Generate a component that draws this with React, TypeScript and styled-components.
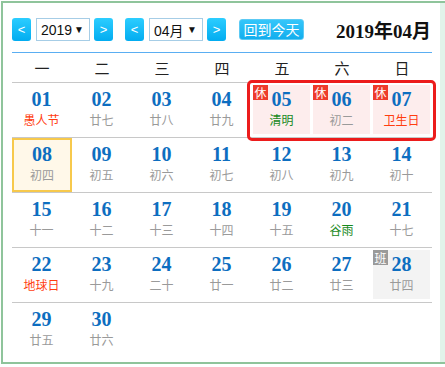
import styled, { createGlobalStyle, css } from "styled-components";

const GlobalStyle = createGlobalStyle`
  html, body {
    margin: 0;
    padding: 0;
    overflow: hidden;
    background: #fff;
  }
  body {
    font-family: "Liberation Sans", "Noto Sans CJK SC", sans-serif;
  }
`;

const Card = styled.div`
  margin: 1px 0 0 1px;
  width: 444px;
  height: 363px;
  box-sizing: border-box;
  border: 2px solid #8fc49b;
  border-right: none;
  display: flex;
`;

const Main = styled.div`
  width: 437px;
  flex: none;
  box-sizing: border-box;
  padding: 0 8px 0 9px;
`;

const Aside = styled.div`
  flex: 1;
  background: #e2f4ea;
`;

const Header = styled.div`
  display: flex;
  align-items: center;
  padding: 13px 0 9px;
  border-bottom: 1px solid #5aaef2;
`;

const ArrowButton = styled.button<{ $gap?: number }>`
  width: 19px;
  height: 23px;
  padding: 0;
  margin-right: ${(p) => p.$gap ?? 0}px;
  border: none;
  border-radius: 3px;
  background: linear-gradient(#2ccdff, #02acf0);
  color: #fff;
  font-family: "Liberation Sans", sans-serif;
  font-size: 13px;
  line-height: 23px;
`;

const Select = styled.div`
  width: 54px;
  height: 23px;
  box-sizing: border-box;
  margin: 0 4px 0 5px;
  border: 1px solid #a6cde6;
  display: flex;
  align-items: center;
  justify-content: space-between;
  padding: 0 5px 0 4px;
  font-size: 14px;
  color: #111;
  background: #fff;

  span {
    font-size: 10px;
  }
`;

const TodayButton = styled.button`
  margin-left: 13px;
  width: 65px;
  height: 21px;
  padding: 0;
  border: 1px solid #5ccaf4;
  border-radius: 3px;
  background: linear-gradient(#35c6fa, #12aeee);
  color: #fff;
  font-family: "Noto Sans CJK SC", sans-serif;
  font-size: 14px;
  line-height: 19px;
`;

const Title = styled.div`
  margin-left: auto;
  margin-right: 1px;
  font-family: "Liberation Serif", "Noto Sans CJK SC", serif;
  font-weight: bold;
  font-size: 19px;
  color: #111;
`;

const Grid = styled.div`
  display: grid;
  grid-template-columns: repeat(7, 60px);
`;

const WeekRow = styled(Grid)`
  height: 30px;
  box-sizing: border-box;
  border-bottom: 1px solid #c8c8c8;
  align-items: center;
  text-align: center;
  font-family: "Noto Sans CJK SC", sans-serif;
  font-size: 15px;
  color: #222;
`;

const DayRow = styled(Grid)<{ $last?: boolean }>`
  position: relative;
  height: 55px;
  box-sizing: border-box;
  border-bottom: ${(p) => (p.$last ? "none" : "1px solid #c8c8c8")};
`;

const Outline = styled.div`
  position: absolute;
  left: 235px;
  top: -3px;
  width: 189px;
  height: 61px;
  box-sizing: border-box;
  border: 3px solid #ec1c1c;
  border-radius: 5px;
  pointer-events: none;
`;

type Tone = "normal" | "holiday" | "work" | "today";

const Cell = styled.div<{ $tone: Tone }>`
  position: relative;
  height: 54px;
  box-sizing: border-box;
  padding: 2px 2px 3px 1px;
  background-clip: content-box;
  text-align: center;
  ${(p) =>
    p.$tone === "holiday" &&
    css`
      background-color: #fdeded;
    `}
  ${(p) =>
    p.$tone === "work" &&
    css`
      background-color: #f3f3f3;
    `}
  ${(p) =>
    p.$tone === "today" &&
    css`
      padding: 0;
      border: 2px solid #f7c94c;
      background-color: #fff8e9;
    `}
`;

const DayNum = styled.div`
  padding-top: 3px;
  line-height: 22px;
  font-family: "Liberation Serif", serif;
  font-weight: bold;
  font-size: 20px;
  color: #0d6ec0;
`;

type LunarKind = "plain" | "festival" | "term";

const Lunar = styled.div<{ $kind: LunarKind }>`
  margin-top: 2px;
  line-height: 16px;
  font-family: "Noto Sans CJK SC", sans-serif;
  font-size: 12px;
  color: ${(p) =>
    p.$kind === "festival" ? "#ff3d10" : p.$kind === "term" ? "#17891c" : "#9a9a9a"};
`;

const Badge = styled.div<{ $work?: boolean }>`
  position: absolute;
  top: 2px;
  left: 1px;
  width: 15px;
  height: 15px;
  background: ${(p) => (p.$work ? "#9a9a9a" : "#ee3b2b")};
  color: #fff;
  font-family: "Noto Sans CJK SC", sans-serif;
  font-size: 12px;
  line-height: 15px;
  text-align: center;
`;

type Day = {
  n: number;
  lunar: string;
  kind?: LunarKind;
  tone?: Tone;
  badge?: "休" | "班";
};

const days: Day[] = [
  { n: 1, lunar: "愚人节", kind: "festival" },
  { n: 2, lunar: "廿七" },
  { n: 3, lunar: "廿八" },
  { n: 4, lunar: "廿九" },
  { n: 5, lunar: "清明", kind: "term", tone: "holiday", badge: "休" },
  { n: 6, lunar: "初二", tone: "holiday", badge: "休" },
  { n: 7, lunar: "卫生日", kind: "festival", tone: "holiday", badge: "休" },
  { n: 8, lunar: "初四", tone: "today" },
  { n: 9, lunar: "初五" },
  { n: 10, lunar: "初六" },
  { n: 11, lunar: "初七" },
  { n: 12, lunar: "初八" },
  { n: 13, lunar: "初九" },
  { n: 14, lunar: "初十" },
  { n: 15, lunar: "十一" },
  { n: 16, lunar: "十二" },
  { n: 17, lunar: "十三" },
  { n: 18, lunar: "十四" },
  { n: 19, lunar: "十五" },
  { n: 20, lunar: "谷雨", kind: "term" },
  { n: 21, lunar: "十七" },
  { n: 22, lunar: "地球日", kind: "festival" },
  { n: 23, lunar: "十九" },
  { n: 24, lunar: "二十" },
  { n: 25, lunar: "廿一" },
  { n: 26, lunar: "廿二" },
  { n: 27, lunar: "廿三" },
  { n: 28, lunar: "廿四", tone: "work", badge: "班" },
  { n: 29, lunar: "廿五" },
  { n: 30, lunar: "廿六" },
];

const weekNames = ["一", "二", "三", "四", "五", "六", "日"];

const pad = (n: number) => (n < 10 ? "0" + n : String(n));

export default function App() {
  const rows: Day[][] = [];
  for (let i = 0; i < days.length; i += 7) rows.push(days.slice(i, i + 7));

  return (
    <>
      <GlobalStyle />
      <Card>
        <Main>
          <Header>
            <ArrowButton>&lt;</ArrowButton>
            <Select>
              2019<span>▼</span>
            </Select>
            <ArrowButton $gap={12}>&gt;</ArrowButton>
            <ArrowButton>&lt;</ArrowButton>
            <Select>
              04月<span>▼</span>
            </Select>
            <ArrowButton>&gt;</ArrowButton>
            <TodayButton>回到今天</TodayButton>
            <Title>2019年04月</Title>
          </Header>
          <WeekRow>
            {weekNames.map((w) => (
              <div key={w}>{w}</div>
            ))}
          </WeekRow>
          {rows.map((row, ri) => (
            <DayRow key={ri} $last={ri === rows.length - 1}>
              {row.map((d) => (
                <Cell key={d.n} $tone={d.tone ?? "normal"}>
                  {d.badge && <Badge $work={d.badge === "班"}>{d.badge}</Badge>}
                  <DayNum>{pad(d.n)}</DayNum>
                  <Lunar $kind={d.kind ?? "plain"}>{d.lunar}</Lunar>
                </Cell>
              ))}
              {ri === 0 && <Outline />}
            </DayRow>
          ))}
        </Main>
        <Aside />
      </Card>
    </>
  );
}
